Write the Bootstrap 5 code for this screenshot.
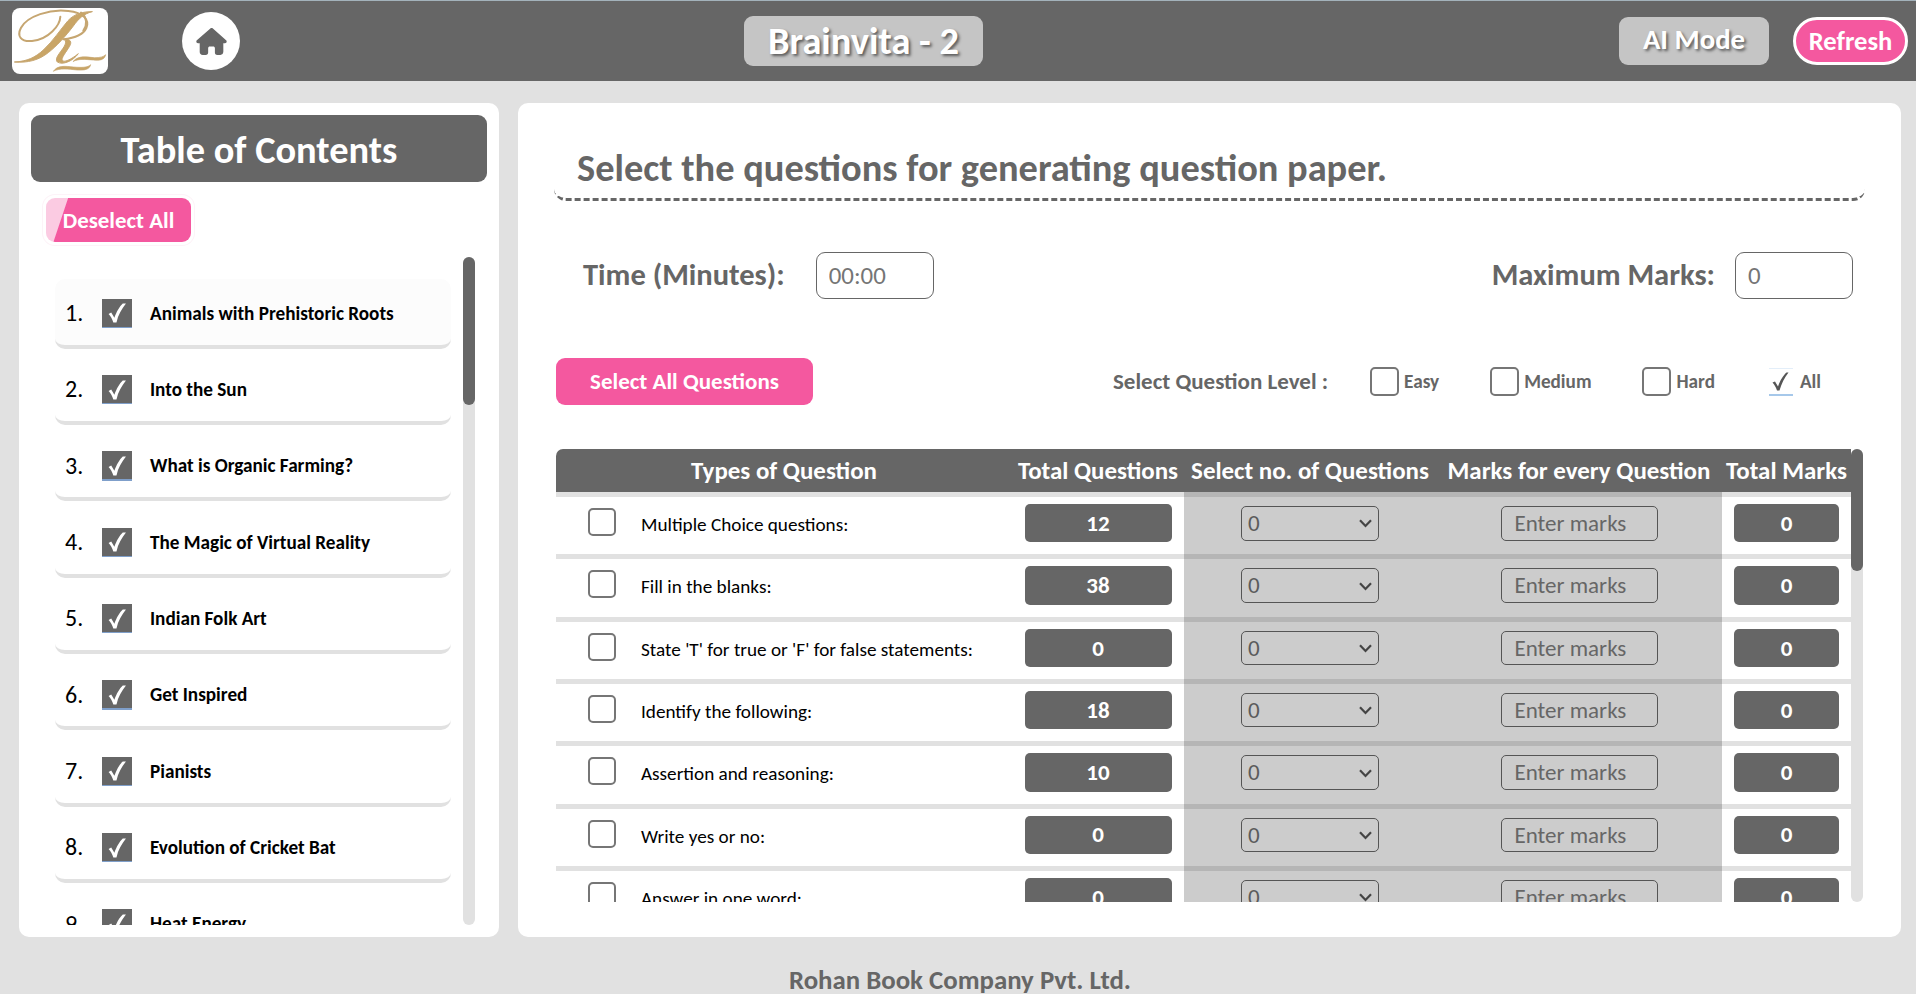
<!DOCTYPE html>
<html lang="en">
<head>
<meta charset="utf-8">
<meta name="viewport" content="width=device-width, initial-scale=1">
<title>Brainvita - 2</title>
<link href="https://cdn.jsdelivr.net/npm/bootstrap@5.3.0/dist/css/bootstrap.min.css" rel="stylesheet">
<style>
  :root { --ink: #666; --pink: #f4589f; --fog: #e1e1e1; }
  html, body { height: 100%; }
  body { background: var(--fog); font-family: Calibri, Carlito, Lato, sans-serif; line-height: 1.2; overflow: hidden; color: var(--ink); }

  .topbar { height: 81px; background: var(--ink); border-top: 1px solid #a3b2bb; padding-left: 12px; padding-right: 8px; }
  .logo { width: 96px; height: 66px; border-radius: 8px; }
  .home { width: 58px; height: 58px; margin-left: 74px; }
  .plaque { background: #c5c5c5; border-radius: 9px; text-shadow: 2px 2px 3px rgba(0,0,0,.55); color: #fff; font-weight: 700; }
  .plaque-title { width: 239px; height: 50px; margin-left: 504px; font-size: 38.4px; }
  .plaque-mode { width: 150px; height: 48px; font-size: 28.8px; padding-bottom: 2px; }
  .btn-refresh { width: 115px; height: 48px; border: 3px solid #fff; font-size: 26.6px; }
  .pink, .pink:hover { background: var(--pink); color: #fff; font-weight: 700; padding: 0; }

  .shell { height: 834px; margin: 22px 15px 0 19px; gap: 19px; }
  .panel { background: #fff; border-radius: 10px; }
  .toc { width: 480px; padding: 12px; }
  .toc-title { height: 67px; border-radius: 9px; background: var(--ink); font-size: 38.4px; padding-top: 3px; }
  .btn-deselect, .btn-deselect:hover { width: 145px; height: 44px; margin: 16px 0 0 15px; border: 0; border-radius: 9px; font-size: 22.9px; box-shadow: 0 0 0 3px #fff, 0 0 0 4px #fdf3f8;
    background: linear-gradient(108.5deg, #fbcbe2 0 20.5px, var(--pink) 21.5px); }
  .toc-scroll { height: 668px; margin: 15px 12px 0 24px; gap: 12px; }
  .toc-list { padding-top: 22px; }
  .toc-item { height: 69.7px; margin-bottom: 6.65px; border-bottom: 4.7px solid var(--fog); border-radius: 10px; color: #000; padding: 3px 0 0 10px; flex: none; }
  .toc-item:first-child { background: #fcfcfc; }
  .toc-num { width: 37px; font-size: 24px; }
  .tick-box { width: 30px; height: 29.5px; background: linear-gradient(var(--ink) 28px, #7f9fca 28px); }
  .toc-name { margin-left: 18px; font-size: 19.2px; }
  .track { width: 12px; border-radius: 6px; background: var(--fog); flex: none; }
  .thumb { border-radius: 6px; background: var(--ink); }

  .work { padding: 35px 36px 0 36px; }
  .headline { height: 63px; padding: 9px 0 0 23px; font-size: 38.4px; border-bottom: 3px dashed var(--ink); border-radius: 12px; line-height: 42px; }
  .facts { height: 48px; margin: 50px 12px 0 29px; font-size: 30.5px; }
  .fact-input, .fact-input::placeholder { color: #757575; opacity: 1; }
  .fact-input { width: 118px; height: 47px; border: 1px solid var(--ink); border-radius: 9px; font-size: 24.9px; padding: 0 12px; }
  .filters { height: 47px; margin: 59px 12px 0 2px; }
  .btn-all { width: 257px; height: 47px; border: 0; border-radius: 9px; font-size: 23px; }
  .box { width: 29px; height: 29px; border: 2px solid #767676; border-radius: 5px; background: #fff; flex: none; }
  .level { font-size: 19.2px; gap: 5px; }
  .level-on { width: 24px; height: 28px; border-top: 1px solid #e3eef9; border-bottom: 2px solid #a6c8ea; }

  .sheet { height: 453px; margin: 44px 0 0 2px; }
  .grid-line { display: grid; grid-template-columns: 456px 172px 252px 286px 129px; flex: none; }
  .sheet-head { height: 43px; background: var(--ink); border-top-left-radius: 7px; font-size: 24.95px; color: #fff; }
  .sheet-row { height: 62.33px; }
  .sheet-row > div { border-top: 5px solid var(--fog); padding-top: 7px; }
  .sheet-row > .dim { background: #ccc; border-top-color: #b5b5b5; padding-top: 9px; }
  .sheet-row .box { width: 28px; height: 28px; margin: 4px 0 0 32px; }
  .q-name { margin-left: 25px; font-size: 19.2px; line-height: 24px; padding-top: 9px; color: #000; }
  .count { height: 38.3px; background: var(--ink); color: #fff; border-radius: 5px; font-size: 23px; padding-top: 1px; }
  .count-q { width: 147px; }
  .count-m { width: 105px; }
  .dim-field { height: 34.5px; border: 1px solid #555; border-radius: 5px; font-size: 23px; color: #666; }
  .dim-select { width: 138px; padding: 1px 6px 0 6px; color: #5b5b5b; }
  .dim-input { width: 157px; padding: 1px 0 0 13px; }
  .foot { font-size: 26.85px; margin: 27px 0 0 4px; }
</style>
</head>
<body class="d-flex flex-column">

<header class="topbar d-flex align-items-center flex-shrink-0">
  <div class="logo bg-white overflow-hidden">
    <svg viewBox="36 24 288 198" width="96" height="66" fill="none" stroke="#c6a671" stroke-linecap="round" stroke-linejoin="round">
      <path stroke-width="6" d="M181 50C180 76 146 118 96 123C62 126 50 108 63 83C82 48 150 26 205 33C250 38 270 60 259 84C250 104 225 114 190 118"/>
      <path stroke-width="6" d="M243 38C262 52 262 76 250 92"/>
      <path fill="#c9a566" stroke-width="3" d="M276 35C250 42 236 56 220 78C196 110 170 138 146 157C116 181 84 189 43 186C82 184 106 172 130 150C160 122 180 90 204 62C222 42 250 34 276 35Z"/>
      <path fill="#c9a566" stroke-width="3" d="M192 118C206 116 216 122 211 134C204 150 186 168 186 180C190 190 214 178 235 161C218 184 188 196 172 186C160 174 190 150 196 132C198 124 196 120 192 118Z"/>
      <path fill="#c9a566" stroke-width="2" d="M220 184C236 164 262 172 284 173C300 173 310 171 317 164C313 180 300 182 280 180C254 178 236 176 220 184Z"/>
      <path fill="#c9a566" stroke-width="2" d="M161 213C172 196 194 198 220 201C244 203 264 203 272 194C268 209 254 211 232 210C202 207 180 204 161 213Z"/>
    </svg>
  </div>
  <a href="#" class="home bg-white rounded-circle d-flex align-items-center justify-content-center" aria-label="Home">
    <svg viewBox="0 0 576 512" width="31" height="27" fill="#666"><path d="M575.8 255.500c0 18-15 32.100-32 32.100h-32l.7 160.200c0 36-20 64.200-56 64.200h-56c-36 0-48-22-48-48v-80c0-20-14-32-32-32h-64c-18 0-32 12-32 32v80c0 26-16 48-48 48h-56c-34 0-56-24-56-56V287.600H32c-18 0-32-14-32-32.100 0-9 3-17 10-24L266.400 8c7-7 15-8 22-8s15 2 21 7L564.800 231.500c8 7 12 15 11 24z"/></svg>
  </a>
  <div class="plaque plaque-title d-flex align-items-center justify-content-center">Brainvita - 2</div>
  <div class="d-flex align-items-center gap-4 ms-auto">
    <div class="plaque plaque-mode d-flex align-items-center justify-content-center">AI Mode</div>
    <button class="btn pink btn-refresh rounded-pill lh-1">Refresh</button>
  </div>
</header>

<main class="shell d-flex flex-shrink-0">
  <aside class="panel toc d-flex flex-column">
    <h1 class="toc-title text-white fw-bold text-center d-flex align-items-center justify-content-center m-0 flex-shrink-0">Table of Contents</h1>
    <button class="btn pink btn-deselect flex-shrink-0">Deselect All</button>
    <div class="toc-scroll d-flex">
      <div class="toc-list d-flex flex-column flex-grow-1 overflow-hidden" id="tocList"></div>
      <div class="track"><div class="thumb" style="height:148px"></div></div>
    </div>
  </aside>

  <section class="panel work flex-grow-1">
    <h2 class="headline fw-bold mb-0">Select the questions for generating question paper.</h2>

    <div class="facts d-flex align-items-center justify-content-between fw-bold">
      <label class="d-flex align-items-center" style="gap:31px">Time (Minutes): <input class="fact-input" placeholder="00:00"></label>
      <label class="d-flex align-items-center" style="gap:20px">Maximum Marks: <input class="fact-input" value="0"></label>
    </div>

    <div class="filters d-flex align-items-center fw-bold">
      <button class="btn pink btn-all">Select All Questions</button>
      <span style="font-size:23px;margin-left:300px">Select Question Level :</span>
      <span class="level d-flex align-items-center" style="margin-left:42px"><i class="box"></i>Easy</span>
      <span class="level d-flex align-items-center" style="margin-left:51px"><i class="box"></i>Medium</span>
      <span class="level d-flex align-items-center" style="margin-left:51px"><i class="box"></i>Hard</span>
      <span class="level d-flex align-items-center" style="margin-left:54px;gap:7px"><i class="level-on d-flex align-items-center justify-content-center"><svg width="17" height="19" viewBox="0 0 17 19"><path d="M.5 10.500 3 9.500 6 14.500C8 8.500 11.500 3 14.500.5L16.500.5C12.500 5.500 9.500 11.500 7.500 18.500L5 18.500C4 15.500 2.500 12.500.5 10.500Z" fill="#555"/></svg></i>All</span>
    </div>

    <div class="sheet d-flex">
      <div class="d-flex flex-column overflow-hidden" id="sheetRows">
        <div class="grid-line sheet-head fw-bold text-center align-items-center">
          <div>Types of Question</div><div>Total Questions</div><div>Select no. of Questions</div><div>Marks for every Question</div><div>Total Marks</div>
        </div>
      </div>
      <div class="track"><div class="thumb" style="height:122px"></div></div>
    </div>
  </section>
</main>

<footer class="foot fw-bold text-center">Rohan Book Company Pvt. Ltd.</footer>

<script>
  const chapters = ["Animals with Prehistoric Roots", "Into the Sun", "What is Organic Farming?", "The Magic of Virtual Reality", "Indian Folk Art", "Get Inspired", "Pianists", "Evolution of Cricket Bat", "Heat Energy"];
  const questions = [["Multiple Choice questions:", 12], ["Fill in the blanks:", 38], ["State 'T' for true or 'F' for false statements:", 0], ["Identify the following:", 18], ["Assertion and reasoning:", 10], ["Write yes or no:", 0], ["Answer in one word:", 0]];

  document.getElementById("tocList").innerHTML = chapters.map((name, i) => `
    <div class="toc-item d-flex align-items-center">
      <span class="toc-num">${i + 1}.</span>
      <span class="tick-box d-flex align-items-center justify-content-center"><svg width="18" height="20" viewBox="0 0 17 19"><path d="M.5 10.500 3 9 6 14C8 8.500 11 3 14 .5L17 .5C13 5.500 9.500 11.500 8 18.500L5 18.500C4 15.500 2.500 12.500.5 10.500Z" fill="#fff"/></svg></span>
      <span class="toc-name fw-bold">${name}</span>
    </div>`).join("");

  document.getElementById("sheetRows").insertAdjacentHTML("beforeend", questions.map(([name, total]) => `
    <div class="grid-line sheet-row">
      <div class="d-flex align-items-start"><i class="box"></i><span class="q-name">${name}</span></div>
      <div class="d-flex justify-content-center"><div class="count count-q fw-bold d-flex align-items-center justify-content-center">${total}</div></div>
      <div class="dim d-flex justify-content-center"><div class="dim-field dim-select d-flex align-items-center justify-content-between">0<svg width="13" height="9" viewBox="0 0 13 9" fill="none" stroke="#444" stroke-width="2.200"><path d="M1 1.300 6.500 7 12 1.300"/></svg></div></div>
      <div class="dim d-flex justify-content-center"><div class="dim-field dim-input d-flex align-items-center">Enter marks</div></div>
      <div class="d-flex justify-content-center"><div class="count count-m fw-bold d-flex align-items-center justify-content-center">0</div></div>
    </div>`).join(""));
</script>
<script src="https://cdn.jsdelivr.net/npm/bootstrap@5.3.0/dist/js/bootstrap.bundle.min.js"></script>
</body>
</html>
